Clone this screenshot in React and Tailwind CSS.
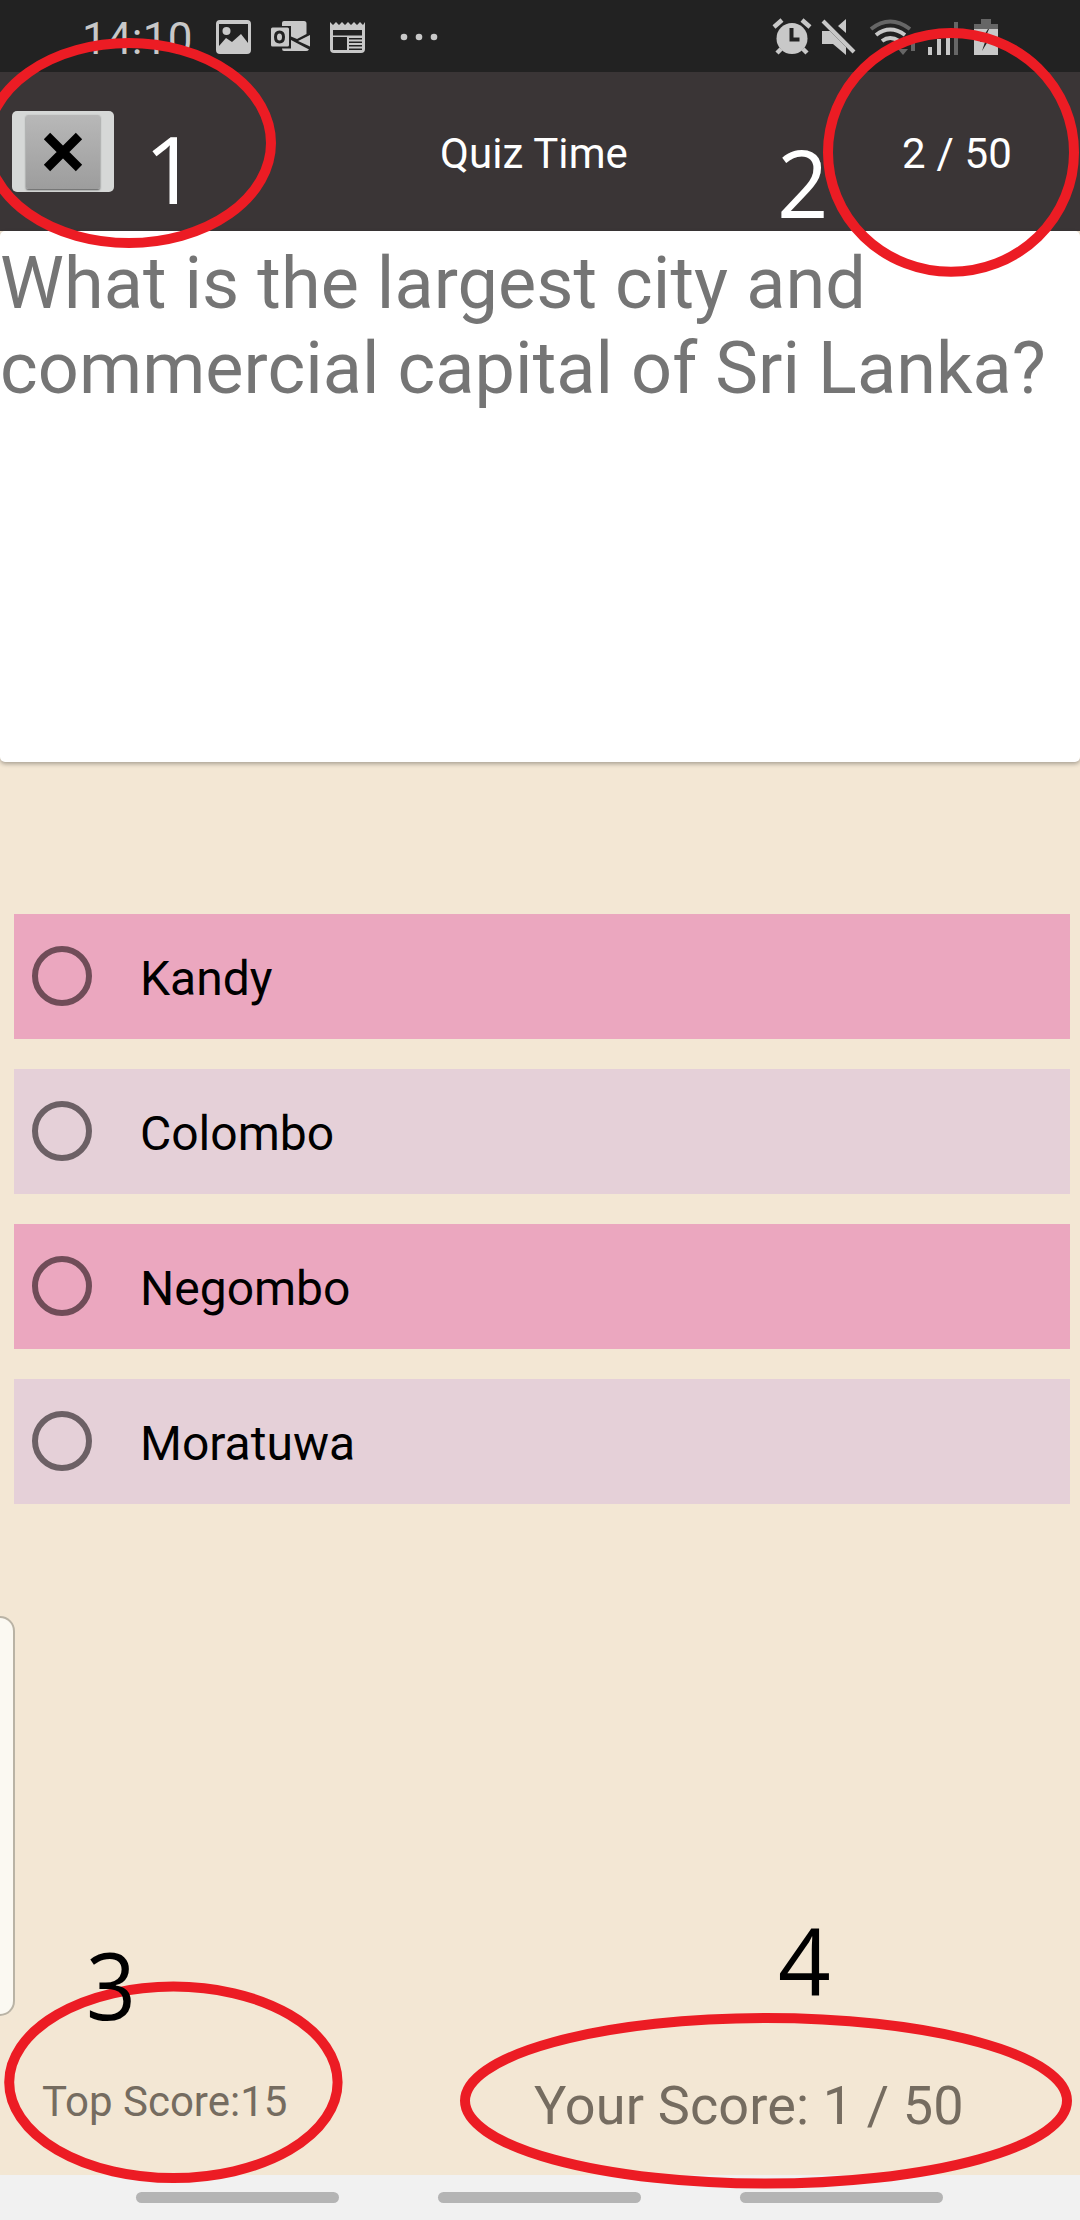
const options = ["Kandy", "Colombo", "Negombo", "Moratuwa"];

function StatusBar() {
  return (
    <div className="flex h-[72px] shrink-0 bg-[#222222] text-[#c8c8c8]">
      <div className="w-[215px] pl-[82px] pt-[13px] text-[44px] leading-[52px] tracking-[0.2px]">14:10</div>
      {/* notification icons */}
      <svg className="h-[72px] w-[240px]" viewBox="215 0 240 72" fill="currentColor">
        <path fillRule="evenodd" d="M220 20h27q4 0 4 4v26q0 4-4 4h-27q-4 0-4-4V24q0-4 4-4zM219 24v22l7-8 6 4 9-8 7 9V24z" />
        <circle cx="226.500" cy="31" r="4" />
        <path d="M284 21h20q2.500 0 2.500 2.500V34l-9.500 5-6-2.500V26h-9v-3q0-2 2-2z" />
        <path d="M310 35v11.500l-12-5.500z" />
        <path d="M282 48.500h9V40l18 9.500q-1 1.500-3 1.500h-22q-2 0-2-2.500z" />
        <path fillRule="evenodd" d="M272.500 27.500h15q1.500 0 1.500 1.500v16q0 1.500-1.500 1.500h-15q-1.500 0-1.500-1.500v-16q0-1.500 1.500-1.500zM279.500 30.500q-5.500 0-5.500 6.500t5.500 6.500 5.500-6.500-5.500-6.500zM279.500 33.500q2.500 0 2.500 3.500t-2.500 3.500-2.500-3.500 2.500-3.500z" />
        <path fillRule="evenodd" d="M330 22l3 3 3-3 3 3 3-3 3 3 3-3 3 3 3-3 3 3 3-3 3 3 2-3v27q0 4-4 4h-27q-4 0-4-4V22zM333 30v5.500h29V30zM333 37v13h14V37zM349 38v1.500h13V38zM349 41.500v1.500h13v-1.500zM349 45v1.500h13V45zM349 48.500v1.500h13v-1.500z" />
        <circle cx="404" cy="37" r="3.300" /><circle cx="419" cy="37" r="3.300" /><circle cx="434" cy="37" r="3.300" />
      </svg>
      {/* system icons */}
      <svg className="ml-auto h-[72px] w-[315px]" viewBox="765 0 315 72" fill="currentColor">
        <circle cx="792" cy="38.500" r="15.500" />
        <path d="M774 27l8-7M802 20l8 7M781 49l-4 4M803 49l4 4" stroke="currentColor" strokeWidth="4.500" />
        <path d="M791.500 28v11.500h8" fill="none" stroke="#222222" strokeWidth="4" />
        <path d="M822 31h8l16 16v8l-13-11h-11zM846 19v14l-8-7z" />
        <path d="M823 21l31 31" stroke="currentColor" strokeWidth="4" />
        <g fill="none" strokeWidth="4">
          <path d="M871 29q19-15 39 0" stroke="#666666" />
          <path d="M876 35q14-11 29 0M882 41q8-6 17 0" stroke="currentColor" />
          <path d="M913 38v13" stroke="#666666" />
        </g>
        <path d="M898 49h10l-5 6z" fill="#666666" />
        <path d="M928 47h4v8h-4zM937 39h4v16h-4zM946 30h4v25h-4z" />
        <path d="M954 22h4v33h-4zM974 28v-4h7v-5h10v5h7v5h-24z" fill="#666666" />
        <path d="M974 29h24v26h-24z" />
        <path d="M988 29l-8 13h5l-3 9 8-13h-5l4-9z" fill="#222222" />
      </svg>
    </div>
  );
}

function Header() {
  return (
    <header className="flex h-[159px] shrink-0 bg-[#3a3536] text-[42px] leading-[50px] text-white">
      <button className="ml-3 mt-[39px] flex h-[81px] w-[102px] justify-center rounded-[5px] bg-[#d6d8d7] pt-1">
        <span className="flex h-[74px] w-[74px] items-center justify-center rounded-[2px] bg-linear-to-b from-[#b8b8b8] to-[#9d9d9d] shadow-[0_1px_2px_#555]">
          <svg className="h-[44px] w-[44px]" viewBox="0 0 44 44" stroke="black" strokeWidth="9">
            <path d="M6 6l32 32M38 6L6 38" />
          </svg>
        </span>
      </button>
      <h1 className="ml-[326px] mt-[57px] w-[462px] tracking-[0.1px]">Quiz Time</h1>
      <span className="mt-[57px] whitespace-nowrap tracking-[0.2px]">2 / 50</span>
    </header>
  );
}

function Markers() {
  return (
    <div className="pointer-events-none absolute inset-0 font-['Open_Sans',sans-serif] text-[94px] leading-[100px]">
      <svg className="absolute inset-0 h-full w-full" viewBox="0 0 1080 2220" fill="none" stroke="#ec1c24" strokeWidth="10">
        <ellipse cx="129" cy="143" rx="142" ry="100" />
        <ellipse cx="951" cy="152.400" rx="123" ry="119.400" />
        <ellipse cx="173.400" cy="2082.300" rx="164.200" ry="95.700" />
        <ellipse cx="766" cy="2100.800" rx="301" ry="82.800" />
      </svg>
      <span className="absolute left-[144px] top-[118px] text-white">1</span>
      <span className="absolute left-[777px] top-[132px] origin-left scale-x-96 text-white">2</span>
      <span className="absolute left-[86px] top-[1934px] origin-left scale-x-93 text-black">3</span>
      <span className="absolute left-[778px] top-[1910px] origin-left scale-x-98 text-black">4</span>
    </div>
  );
}

export default function App() {
  return (
    <div className="relative flex h-[2220px] w-[1080px] flex-col overflow-hidden bg-[#f3e7d4] font-[Roboto,sans-serif]">
      <StatusBar />
      <Header />
      <section className="h-[531px] shrink-0 rounded-[5px] bg-white text-[72px] leading-[85px] tracking-[0.08px] text-[#757575] shadow-[0_2px_4px_rgba(0,0,0,0.3)]">
        <p className="pt-[10px]">What is the largest city and<br />commercial capital of Sri Lanka?</p>
      </section>
      <main className="mt-[152px] flex flex-col gap-[30px] pl-[14px] pr-[10px]">
        {options.map((name, i) => (
          <label key={name} className={`flex h-[125px] pl-[18px] ${i % 2 ? "bg-[#e5d0d8]" : "bg-[#eba7bf]"}`}>
            <span className={`mt-8 h-[60px] w-[60px] rounded-full border-6 ${i % 2 ? "border-[#6c6065]" : "border-[#704c58]"}`} />
            <span className="ml-12 mt-[37px] text-[48px] leading-[56px] text-black">{name}</span>
          </label>
        ))}
      </main>
      <aside className="mt-[112px] h-[400px] w-[15px] shrink-0 rounded-r-[15px] border-2 border-l-0 border-[#b9b3a5] bg-[#fbf9f2]" />
      <footer className="flex h-[159px] shrink-0 text-[#756c60]">
        <p className="w-[534px] pl-[42px] pt-[61px] text-[42px] leading-[50px]">Top Score:15</p>
        <p className="pt-[58px] text-[54px] leading-[64px] tracking-[0.15px]">Your Score: 1 / 50</p>
      </footer>
      <nav className="flex h-[45px] shrink-0 gap-[99px] bg-[#f1f1f1] pl-[136px] pt-[17px]">
        <span className="h-[11px] w-[203px] rounded-full bg-[#b4b4b4]" />
        <span className="h-[11px] w-[203px] rounded-full bg-[#b4b4b4]" />
        <span className="h-[11px] w-[203px] rounded-full bg-[#b4b4b4]" />
      </nav>
      <Markers />
    </div>
  );
}
